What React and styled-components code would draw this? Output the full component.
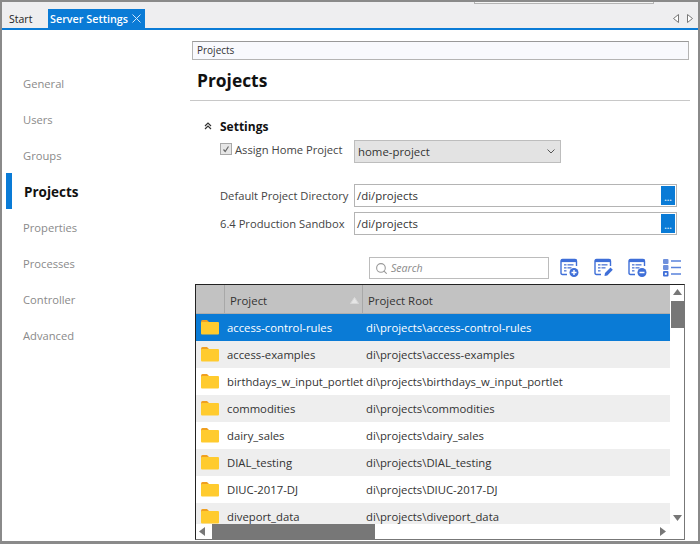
import React from 'react';
import styled, { createGlobalStyle } from 'styled-components';
import { LuSearch } from 'react-icons/lu';

const GlobalStyle = createGlobalStyle`
  html, body { margin: 0; padding: 0; background: #fff; }
  body { font-family: "Open Sans", "Noto Sans", sans-serif; }
`;

const NAV = ['General', 'Users', 'Groups', 'Projects', 'Properties', 'Processes', 'Controller', 'Advanced'];

const ROWS = [
  'access-control-rules',
  'access-examples',
  'birthdays_w_input_portlet',
  'commodities',
  'dairy_sales',
  'DIAL_testing',
  'DIUC-2017-DJ',
  'diveport_data',
];

const Folder = () => (
  <svg width="18" height="15" viewBox="0 0 18 15">
    <path d="M0 2 Q0 0 1.5 0 H6 L8 2 H6 Q0 2 0 4 Z" fill="#f0a020" />
    <path d="M0 3 Q0 2 1 2 H17 Q18 2 18 3 V13.5 Q18 14.5 17 14.5 H1 Q0 14.5 0 13.5 Z" fill="#ffcb2e" />
  </svg>
);

const GridIcon = ({ children }) => (
  <svg width="20" height="20" viewBox="0 0 20 20" fill="none">
    <path d="M7 16.5 H2.5 Q1 16.5 1 15 V3 Q1 1.5 2.5 1.5 H15 Q16.5 1.5 16.5 3 V8" stroke="#3f6fd8" strokeWidth="1.4" />
    <rect x="1" y="1.5" width="15.5" height="2.6" fill="#3f6fd8" />
    <rect x="4" y="6" width="2.5" height="1.6" fill="#6f90dc" />
    <rect x="7.5" y="6" width="6" height="1.6" fill="#6f90dc" />
    <rect x="4" y="9" width="2.5" height="1.6" fill="#6f90dc" />
    <rect x="7.5" y="9" width="4" height="1.6" fill="#6f90dc" />
    <rect x="4" y="12" width="2.5" height="1.6" fill="#6f90dc" />
    {children}
  </svg>
);

const AddIcon = () => (
  <GridIcon>
    <circle cx="14" cy="14.5" r="4.5" fill="#3f6fd8" />
    <path d="M11.5 14.5 H16.5 M14 12 V17" stroke="#fff" strokeWidth="1.4" />
  </GridIcon>
);

const EditIcon = () => (
  <GridIcon>
    <path d="M10.5 18 L11 15 L16.5 9.5 L18.8 11.8 L13.3 17.4 Z" fill="#3f6fd8" />
  </GridIcon>
);

const RemoveIcon = () => (
  <GridIcon>
    <circle cx="14" cy="14.5" r="4.5" fill="#3f6fd8" />
    <path d="M11.5 14.5 H16.5" stroke="#fff" strokeWidth="1.5" />
  </GridIcon>
);

const ListIcon = () => (
  <svg width="20" height="20" viewBox="0 0 20 20">
    <rect x="1" y="1" width="5.5" height="5" rx="1" fill="#6f90dc" />
    <rect x="1" y="7" width="5.5" height="5" rx="1" fill="#6f90dc" />
    <rect x="1" y="13" width="5.5" height="5.5" rx="1" fill="#3f6fd8" />
    <rect x="2.8" y="14.8" width="2" height="2" fill="#fff" />
    <path d="M9 3 H19 M9 9.5 H19 M9 16 H19" stroke="#5a83dc" strokeWidth="1.6" />
  </svg>
);

const App = () => (
  <>
    <GlobalStyle />
    <Window>
      <TopSlot />
      <TabBar>
        <Tab>Start</Tab>
        <ActiveTab>
          Server Settings
          <svg width="9" height="9" viewBox="0 0 9 9">
            <path d="M.5 .5 L8.5 8.5 M8.5 .5 L.5 8.5" stroke="#cfe6fa" strokeWidth="1" />
          </svg>
        </ActiveTab>
        <TabArrows>
          <svg width="6" height="9" viewBox="0 0 6 9"><path d="M5.5 .5 V8.5 L.5 4.5 Z" fill="#fff" stroke="#777" /></svg>
          <svg width="6" height="9" viewBox="0 0 6 9"><path d="M.5 .5 V8.5 L5.5 4.5 Z" fill="#fff" stroke="#777" /></svg>
        </TabArrows>
      </TabBar>
      <Body>
        <Nav>
          {NAV.map((item) => (
            <NavItem key={item} $active={item === 'Projects'}>{item}</NavItem>
          ))}
        </Nav>
        <Main>
          <PathBar>Projects</PathBar>
          <Title>Projects</Title>
          <Settings>
            <SectionHead>
              <svg width="8" height="8" viewBox="0 0 8 8">
                <path d="M1 4 L4 1 L7 4 M1 7 L4 4 L7 7" fill="none" stroke="#333" strokeWidth="1.2" />
              </svg>
              Settings
            </SectionHead>
            <CheckRow>
              <CheckLabel>
                <CheckBox>
                  <svg width="8" height="8" viewBox="0 0 8 8">
                    <path d="M1.5 4.5 L3.2 6.5 L6.5 1.5" fill="none" stroke="#666" strokeWidth="1.2" />
                  </svg>
                </CheckBox>
                Assign Home Project
              </CheckLabel>
              <Select>
                home-project
                <svg width="8" height="5" viewBox="0 0 8 5">
                  <path d="M.5 .5 L4 4 L7.5 .5" fill="none" stroke="#555" strokeWidth="1" />
                </svg>
              </Select>
            </CheckRow>
            <FieldRow>
              <FieldLabel>Default Project Directory</FieldLabel>
              <Field>/di/projects<BrowseButton>...</BrowseButton></Field>
            </FieldRow>
            <FieldRow>
              <FieldLabel>6.4 Production Sandbox</FieldLabel>
              <Field>/di/projects<BrowseButton>...</BrowseButton></Field>
            </FieldRow>
          </Settings>
          <Toolbar>
            <SearchBox><LuSearch size={13} color="#999" /><span>Search</span></SearchBox>
            <ToolIcons>
              <AddIcon />
              <EditIcon />
              <RemoveIcon />
              <ListIcon />
            </ToolIcons>
          </Toolbar>
          <Table>
            <TableArea>
              <HeaderRow>
                <HeadCell />
                <HeadCell>
                  Project
                  <svg width="9" height="7" viewBox="0 0 9 7"><path d="M4.5 .5 L8.5 6.5 H.5 Z" fill="#e6e6e6" stroke="#d8d8d8" /></svg>
                </HeadCell>
                <HeadCell>Project Root</HeadCell>
              </HeaderRow>
              {ROWS.map((name, i) => (
                <Row key={name} $selected={i === 0} $odd={i % 2 === 1}>
                  <FolderCell><Folder /></FolderCell>
                  <NameCell>{name}</NameCell>
                  <RootCell>di\projects\{name}</RootCell>
                </Row>
              ))}
            </TableArea>
            <VScroll>
              <svg width="9" height="6" viewBox="0 0 9 6"><path d="M4.5 0 L9 6 H0 Z" fill="#777" /></svg>
              <VThumb />
              <svg width="9" height="6" viewBox="0 0 9 6"><path d="M0 0 H9 L4.5 6 Z" fill="#777" /></svg>
            </VScroll>
            <HScroll>
              <svg width="6" height="9" viewBox="0 0 6 9"><path d="M6 0 V9 L0 4.5 Z" fill="#777" /></svg>
              <HThumb />
              <svg width="6" height="9" viewBox="0 0 6 9"><path d="M0 0 V9 L6 4.5 Z" fill="#777" /></svg>
            </HScroll>
            <Corner />
          </Table>
        </Main>
      </Body>
    </Window>
  </>
);

const Window = styled.div`
  position: relative;
  width: 700px;
  height: 544px;
  box-sizing: border-box;
  border: 2px solid #8a8a8a;
  border-bottom-width: 3px;
  display: flex;
  flex-direction: column;
  overflow: hidden;
  background: #fff;
`;

const TopSlot = styled.div`
  position: absolute;
  left: 472px;
  top: -2px;
  width: 180px;
  height: 4px;
  box-sizing: border-box;
  border: 1px solid #b4b4b4;
  border-top: 0;
  background: #f4f4f4;
`;

const TabBar = styled.div`
  height: 26px;
  flex: none;
  display: flex;
  align-items: flex-end;
  background: #eeeef0;
  border-bottom: 2px solid #0a7bd6;
  padding-left: 7px;
`;

const Tab = styled.div`
  width: 39px;
  height: 18px;
  font-size: 10.5px;
  line-height: 18px;
  color: #222;
`;

const ActiveTab = styled.div`
  width: 97px;
  height: 19px;
  box-sizing: border-box;
  display: flex;
  align-items: center;
  gap: 4px;
  padding-left: 2px;
  background: #0a7bd6;
  color: #fff;
  font-size: 10.8px;
  font-weight: 600;
`;

const TabArrows = styled.div`
  margin-left: auto;
  display: flex;
  gap: 8px;
  padding: 0 5px 5px 0;
`;

const Body = styled.div`
  flex: 1;
  min-height: 0;
  display: flex;
`;

const Nav = styled.nav`
  width: 188px;
  flex: none;
  padding: 35px 0 0 4px;
  box-sizing: border-box;
`;

const NavItem = styled.div`
  height: 36px;
  display: flex;
  align-items: center;
  box-sizing: border-box;
  padding-left: ${(p) => (p.$active ? '12px' : '17px')};
  padding-top: ${(p) => (p.$active ? '2px' : '0')};
  border-left: ${(p) => (p.$active ? '6px solid #0a7bd6' : '0')};
  font-size: ${(p) => (p.$active ? '13.5px' : '11.2px')};
  font-weight: ${(p) => (p.$active ? 700 : 400)};
  color: ${(p) => (p.$active ? '#111' : '#8a8a8a')};
`;

const Main = styled.main`
  flex: 1;
  min-width: 0;
  padding-top: 11px;
`;

const PathBar = styled.div`
  margin: 0 9px 0 2px;
  height: 19px;
  box-sizing: border-box;
  border: 1px solid #b4b4b4;
  border-top-color: #999;
  background: #f8f9fd;
  font-size: 10px;
  line-height: 17px;
  padding-left: 4px;
  color: #333;
`;

const Title = styled.h1`
  margin: 0 8px 0 0;
  height: 41px;
  box-sizing: border-box;
  border-bottom: 1px solid #c8c8c8;
  padding: 7px 0 0 7px;
  font-size: 17.4px;
  line-height: 26px;
  font-weight: 700;
  color: #111;
`;

const Settings = styled.section`
  padding: 16px 0 0 14px;
`;

const SectionHead = styled.div`
  display: flex;
  align-items: center;
  gap: 8px;
  height: 18px;
  font-size: 12px;
  font-weight: 700;
  color: #111;
`;

const CheckRow = styled.div`
  display: flex;
  align-items: flex-start;
  margin-top: 5px;
  padding-left: 16px;
`;

const CheckLabel = styled.label`
  width: 134px;
  height: 18px;
  display: flex;
  align-items: center;
  gap: 3px;
  font-size: 11.2px;
  color: #444;
`;

const CheckBox = styled.span`
  width: 12px;
  height: 12px;
  box-sizing: border-box;
  border: 1px solid #a8a8a8;
  background: #e6e6e6;
  display: flex;
  align-items: center;
  justify-content: center;
`;

const Select = styled.div`
  width: 207px;
  height: 23px;
  box-sizing: border-box;
  border: 1px solid #bdbdbd;
  background: #e3e3e3;
  padding: 0 5px 0 3px;
  display: flex;
  align-items: center;
  justify-content: space-between;
  font-size: 11.4px;
  color: #333;
`;

const FieldRow = styled.div`
  display: flex;
  align-items: center;
  margin-top: 5px;
  padding-left: 16px;

  ${CheckRow} + & {
    margin-top: 21px;
  }
`;

const FieldLabel = styled.div`
  width: 134px;
  font-size: 11.2px;
  color: #444;
  white-space: nowrap;
`;

const Field = styled.div`
  width: 323px;
  height: 23px;
  box-sizing: border-box;
  border: 1px solid #b4b4b4;
  padding: 0 1px 0 2px;
  display: flex;
  align-items: center;
  justify-content: space-between;
  font-size: 11.4px;
  color: #333;
`;

const BrowseButton = styled.div`
  width: 14px;
  height: 19px;
  background: #0a7bd6;
  color: #cfe6fa;
  font-size: 9px;
  line-height: 24px;
  text-align: center;
  font-weight: 700;
  overflow: hidden;
`;

const Toolbar = styled.div`
  display: flex;
  align-items: center;
  height: 24px;
  margin-top: 21px;
  padding-left: 179px;
`;

const SearchBox = styled.div`
  width: 180px;
  height: 22px;
  box-sizing: border-box;
  border: 1px solid #bcbcbc;
  display: flex;
  align-items: center;
  gap: 3px;
  padding-left: 5px;
  font-size: 10.6px;
  font-style: italic;
  color: #8a8a8a;
`;

const ToolIcons = styled.div`
  display: flex;
  gap: 14px;
  margin-left: 11px;
`;

const Table = styled.div`
  margin: 4px 0 0 5px;
  width: 490px;
  height: 256px;
  box-sizing: border-box;
  border: 1px solid #777;
  border-top-color: #222;
  border-left-color: #222;
  display: grid;
  grid-template-columns: 474px 14px;
  grid-template-rows: 239px 15px;
`;

const TableArea = styled.div`
  overflow: hidden;
`;

const HeaderRow = styled.div`
  height: 29px;
  display: grid;
  grid-template-columns: 29px 138px 1fr;
  background: #c2c2c2;
  border-bottom: 1px solid #aeaeae;
  box-sizing: border-box;
`;

const HeadCell = styled.div`
  display: flex;
  align-items: center;
  justify-content: space-between;
  padding: 2px 3px 0 5px;
  border-right: 1px solid #a8a8a8;
  font-size: 11.4px;
  color: #333;

  &:last-child {
    border-right: 0;
  }
`;

const Row = styled.div`
  height: 27px;
  display: grid;
  grid-template-columns: 29px 138px 1fr;
  align-items: center;
  font-size: 11.3px;
  background: ${(p) => (p.$selected ? '#0a7bd6' : p.$odd ? '#eeeeee' : '#fff')};
  color: ${(p) => (p.$selected ? '#fff' : '#333')};
  white-space: nowrap;
`;

const FolderCell = styled.div`
  display: flex;
  padding-left: 5px;
  height: 15px;
`;

const NameCell = styled.div`
  padding-left: 2px;
`;

const RootCell = styled.div`
  padding-left: 3px;
`;

const VScroll = styled.div`
  display: flex;
  flex-direction: column;
  align-items: center;
  justify-content: space-between;
  padding: 4px 0 3px;
  box-sizing: border-box;
`;

const VThumb = styled.div`
  width: 13px;
  height: 27px;
  background: #777;
  margin: 6px 0 auto 1px;
`;

const HScroll = styled.div`
  display: flex;
  align-items: center;
  padding: 0 4px 0 3px;
  box-sizing: border-box;
`;

const HThumb = styled.div`
  width: 163px;
  height: 15px;
  background: #777;
  margin: 0 auto 0 7px;
`;

const Corner = styled.div``;

export default App;
